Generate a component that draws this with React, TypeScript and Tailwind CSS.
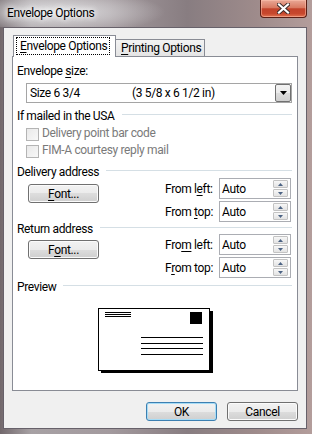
import type { ReactNode } from 'react'

function U({ children }: { children: ReactNode }) {
  return <span className="underline decoration-1 underline-offset-2">{children}</span>
}

function Group({ children, className = '' }: { children: ReactNode; className?: string }) {
  return (
    <div className={`flex items-start ${className}`}>
      <span>{children}</span>
      <div className="ml-[7px] mt-[6px] h-px flex-1 bg-[#d5dfe5]" />
    </div>
  )
}

function WinButton({ children, primary = false }: { children: ReactNode; primary?: boolean }) {
  return (
    <div
      className={`flex h-[19px] w-[71px] items-center justify-center rounded-[3px] border bg-[linear-gradient(#f2f2f2_0%,#ebebeb_50%,#dddddd_50%,#cfcfcf_100%)] ${
        primary
          ? 'border-[#3c7fb1] shadow-[inset_0_0_0_1px_#a6dcf6]'
          : 'border-[#707070] shadow-[inset_0_0_0_1px_#fbfbfb]'
      }`}
    >
      <span>{children}</span>
    </div>
  )
}

function Arrow({ up }: { up?: boolean }) {
  return (
    <div className="flex h-[8px] w-[15px] items-center justify-center rounded-[1px] border border-[#c3c3c3] bg-[linear-gradient(#f7f7f7,#e3e3e3)]">
      <svg width="5" height="3" viewBox="0 0 5 3">
        <polygon points={up ? '0,3 2.5,0 5,3' : '0,0 5,0 2.5,3'} fill="#4c6384" />
      </svg>
    </div>
  )
}

function Spin() {
  return (
    <div className="flex h-[21px] w-[72px] items-center border border-[#abadb3] bg-white px-[2px]">
      <span className="flex-1">Auto</span>
      <div className="flex flex-col gap-px">
        <Arrow up />
        <Arrow />
      </div>
    </div>
  )
}

function Check({ label }: { label: string }) {
  return (
    <div className="ml-[9px] flex h-[16px] items-start">
      <div className="mt-[3px] h-[13px] w-[13px] border border-[#b4b4b4] bg-[linear-gradient(135deg,#e9e9e9,#f8f8f8)]" />
      <span className="ml-[3px] text-[#7a7a7a]">{label}</span>
    </div>
  )
}

function AddressBlock({ font, left, top }: { font: ReactNode; left: ReactNode; top: ReactNode }) {
  return (
    <div className="flex h-[44px]">
      <div className="ml-[11px] mt-[6px]">
        <WinButton>{font}</WinButton>
      </div>
      <div className="ml-auto mr-px flex flex-col gap-[2px]">
        <div className="flex items-center">
          <span className="w-[54px]">{left}</span>
          <Spin />
        </div>
        <div className="flex items-center">
          <span className="w-[54px]">{top}</span>
          <Spin />
        </div>
      </div>
    </div>
  )
}

function Envelope() {
  return (
    <svg width="115" height="65" viewBox="0 0 115 65">
      <rect x="3" y="3" width="112" height="62" fill="#000" />
      <rect x="0.5" y="0.5" width="111" height="62" fill="#fff" stroke="#000" />
      <rect x="92" y="4" width="12" height="12" fill="#000" />
      <rect x="7" y="4" width="26" height="1" fill="#000" />
      <rect x="7" y="6" width="26" height="1" fill="#000" />
      <rect x="7" y="8" width="26" height="1" fill="#000" />
      <rect x="43" y="29" width="62" height="1" fill="#000" />
      <rect x="43" y="35" width="62" height="1" fill="#000" />
      <rect x="43" y="40" width="62" height="1" fill="#000" />
      <rect x="43" y="46" width="62" height="1" fill="#000" />
    </svg>
  )
}

export default function App() {
  return (
    <div className="h-[434px] w-[312px] overflow-hidden whitespace-nowrap bg-[linear-gradient(90deg,#72686c_0%,#a7a1a4_10%,#a39a9e_35%,#887d81_60%,#9e8b8b_82%,#b39d9b_100%)] font-['Roboto',sans-serif] text-[12px] leading-4 tracking-[-0.35px] text-black">
      {/* title bar */}
      <div className="flex h-[27px] items-start bg-[radial-gradient(ellipse_110px_22px_at_55px_12px,rgba(226,226,228,1),rgba(226,226,228,0))]">
        <span className="ml-[7px] mt-[5px] [text-shadow:0_0_6px_#fff,0_0_6px_#fff]">Envelope Options</span>
        <div className="ml-auto mr-[5px] flex h-[18px] w-[47px] items-center justify-center rounded-b-[4px] border border-t-0 border-[#5a1e14] bg-[linear-gradient(#e9a896_0%,#d97a62_45%,#c2422a_52%,#c7482d_80%,#e27453_100%)] shadow-[inset_0_0_0_1px_rgba(255,200,180,0.5)]">
          <svg width="13" height="11" viewBox="0 0 13 11">
            <path d="M2 1.5 L11 9.5 M11 1.5 L2 9.5" stroke="#3b2a28" strokeWidth="4" strokeLinecap="square" />
            <path d="M2 1.5 L11 9.5 M11 1.5 L2 9.5" stroke="#fff" strokeWidth="2.2" strokeLinecap="square" />
          </svg>
        </div>
      </div>

      {/* client area */}
      <div className="ml-[3px] flex h-[402px] w-[304px] flex-col border border-[#67616a] bg-[#f0f0f0]">
        <div className="ml-[9px] mt-[7px] flex items-end">
          <div className="relative z-10 -mb-px h-[22px] w-[103px] border border-b-0 border-[#898c95] bg-white px-[2px] pt-px">
            <div className="w-[94px] border border-dotted border-black px-[3px]">
              <U>E</U>nvelope Options
            </div>
          </div>
          <div className="flex h-[17px] w-[89px] items-center border border-b-0 border-l-0 border-[#898c95] bg-[linear-gradient(#f3f3f3,#e4e4e4)] pl-[5px]">
            <span>
              <U>P</U>rinting Options
            </span>
          </div>
        </div>

        <div className="ml-[8px] flex h-[335px] w-[286px] flex-col border border-[#898c95] bg-white pl-[4px] pr-[5px]">
          <div className="mt-[6px] h-[16px]">
            Envelope <U>s</U>ize:
          </div>
          <div className="ml-[9px] mt-[4px] flex h-[20px] items-center border border-[#a5a5a5] bg-white pl-[3px]">
            <span className="w-[102px]">Size 6 3/4</span>
            <span className="flex-1">(3 5/8 x 6 1/2 in)</span>
            <div className="flex h-[18px] w-[16px] items-center justify-center rounded-[2px] border border-[#707070] bg-[linear-gradient(#f3f3f3_0%,#ebebeb_50%,#dddddd_50%,#cfcfcf_100%)]">
              <svg width="7" height="4" viewBox="0 0 7 4">
                <polygon points="0,0 7,0 3.5,4" fill="#000" />
              </svg>
            </div>
          </div>

          <Group className="mt-[5px] h-[14px]">If mailed in the USA</Group>
          <div className="mt-[3px]">
            <Check label="Delivery point bar code" />
          </div>
          <div className="mt-px">
            <Check label="FIM-A courtesy reply mail" />
          </div>

          <Group className="mt-[6px] h-[14px]">Delivery address</Group>
          <AddressBlock
            font={
              <>
                <U>F</U>ont...
              </>
            }
            left={
              <>
                From l<U>e</U>ft:
              </>
            }
            top={
              <>
                From <U>t</U>op:
              </>
            }
          />

          <Group className="-mt-px h-[13px]">Return address</Group>
          <AddressBlock
            font={
              <>
                F<U>o</U>nt...
              </>
            }
            left={
              <>
                Fro<U>m</U> left:
              </>
            }
            top={
              <>
                F<U>r</U>om top:
              </>
            }
          />

          <Group className="mt-px h-[14px]">Preview</Group>
          <div className="ml-[81px] mt-[15px]">
            <Envelope />
          </div>
        </div>

        <div className="mr-[8px] mt-[11px] flex justify-end gap-[10px]">
          <WinButton primary>OK</WinButton>
          <WinButton>Cancel</WinButton>
        </div>
      </div>
    </div>
  )
}
